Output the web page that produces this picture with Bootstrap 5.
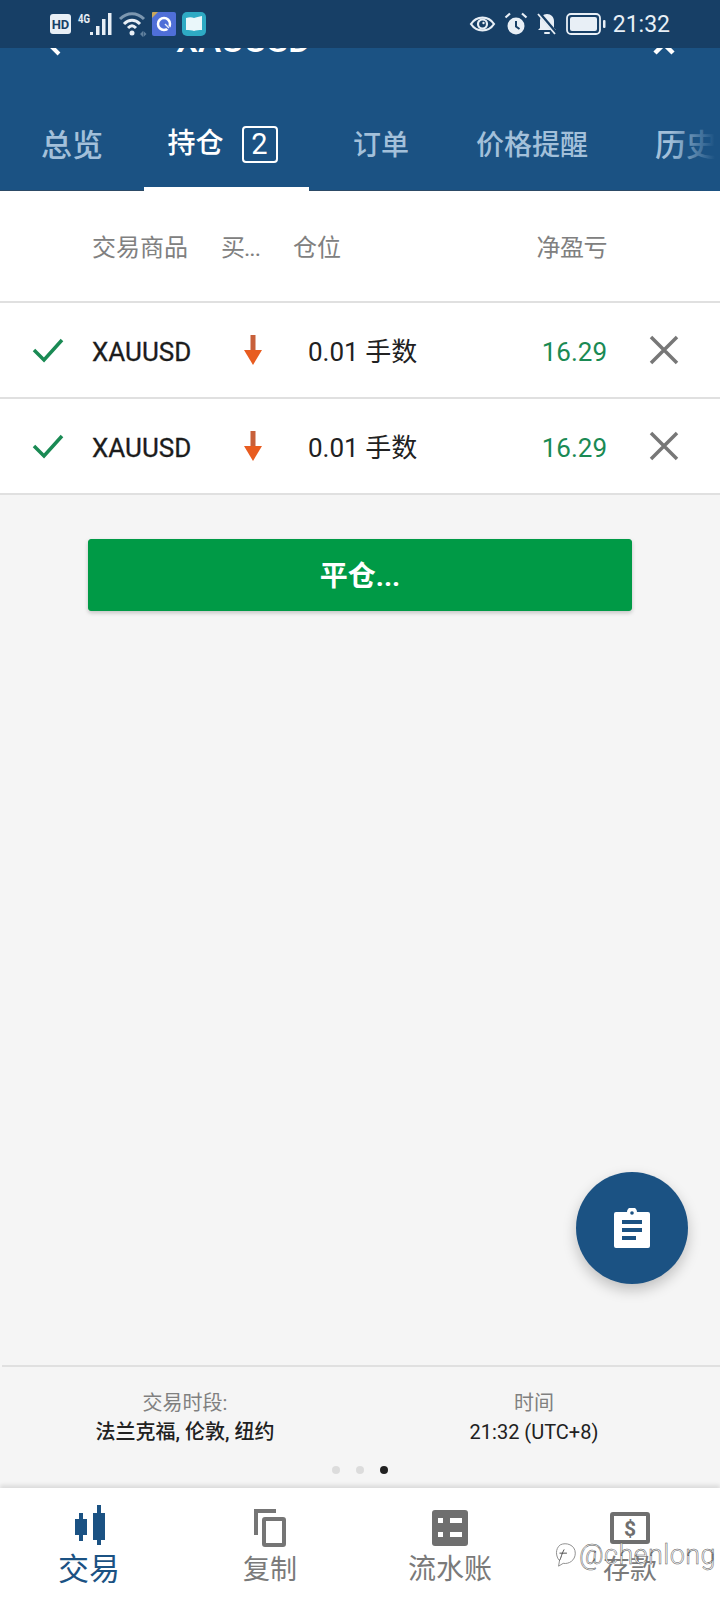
<!DOCTYPE html>
<html lang="zh-CN">
  <head>
    <meta charset="UTF-8" />
    <meta name="viewport" content="width=device-width, initial-scale=1.0" />
    <title>持仓</title>
    <link href="https://cdn.jsdelivr.net/npm/bootstrap@5.3.0/dist/css/bootstrap.min.css" rel="stylesheet" />
    <style>
      html, body { margin: 0; background: #f5f5f5; }
      .phone {
        width: 720px; height: 1600px; overflow: hidden;
        font-family: Roboto, "Noto Sans CJK SC", sans-serif;
        background: #f5f5f5; color: #212121;
      }
      /* status bar */
      .status-bar { height: 48px; background: #173f66; z-index: 2; padding: 0 50px 0 50px; color: #e8eff6; flex-shrink: 0; }
      .status-time { font-size: 23px; line-height: 1; margin-left: 7px; }
      .app-gap { margin-left: 6px; }
      /* header */
      .app-head { height: 143px; background: #1b5283; flex-shrink: 0; box-shadow: inset 0 -1px 0 #2c4a66; }
      .title-row { height: 34px; margin-top: -24px; padding-left: 176px; color: #fff; font-size: 35px; line-height: 34px; font-weight: 500; }
      .title-row svg { position: absolute; top: 10px; }
      .tab-row { height: 94px; margin-top: 39px; }
      .tab-item { height: 94px; min-width: 144px; padding-top: 4px; color: #a3c0da; font-size: 28px; font-weight: 500; white-space: nowrap; flex-shrink: 0; }
      .tab-big { font-size: 31px; }
      .tab-on { width: 165px; color: #fff; border-bottom: 4px solid #fff; padding-top: 4px; padding-right: 8px; }
      .tab-wide { padding-left: 23px; padding-right: 27px; }
      .tab-last { padding-left: 40px; }
      .tab-count { width: 36px; height: 37px; margin-left: 18px; border: 2px solid #fff; border-radius: 4px; font-size: 29px; font-weight: 400; line-height: 33px; text-align: center; }
      .tab-fade { position: absolute; right: 0; top: 0; width: 50px; height: 94px; background: linear-gradient(to right, rgba(27,82,131,0), #1b5283 90%); }
      /* positions */
      .pos-head { height: 112px; padding-top: 3px; background: #fff; border-bottom: 2px solid #e0e0e0; color: #808080; font-size: 24px; }
      .pos-row { height: 96px; background: #fff; border-bottom: 2px solid #e0e0e0; font-size: 26px; }
      .col-check { width: 92px; padding-left: 32px; }
      .col-symbol { width: 129px; }
      .col-side { width: 72px; }
      .head-side { letter-spacing: -1px; }
      .col-size { width: 244px; }
      .col-side-val { padding-left: 22px; }
      .col-size-val { padding-left: 15px; padding-top: 4px; }
      .col-net { width: 73px; margin-left: -3px; text-align: right; }
      .head-net { letter-spacing: -.5px; }
      .row-net { padding-top: 4px; }
      .col-close { padding-left: 42px; }
      .sym-text { padding-top: 4px; color: #1c1c1c; -webkit-text-stroke: .3px #1c1c1c; }
      .net-val { color: #1a8a54; }
      .close-btn-wide { width: 544px; height: 72px; margin: 44px 0 0 88px; padding-top: 10px; border-radius: 3px; background: #009a46; border-color: #009a46; color: #fff; font-size: 28px; font-weight: 700; box-shadow: 0 2px 4px rgba(0,0,0,.2); }
      .fab-btn { position: absolute; right: 32px; bottom: 316px; width: 112px; height: 112px; border-radius: 50%; background: #1b5283; box-shadow: 0 6px 14px rgba(0,0,0,.22); }
      /* session info */
      .info-box { height: 123px; border-top: 2px solid #e0e0e0; margin-left: 2px; flex-shrink: 0; padding-top: 22px; font-size: 20px; line-height: 29px; }
      .info-label { color: #808080; }
      .info-main { font-weight: 500; }
      .info-left { width: 366px; }
      .info-right { width: 332px; }
      .dot-row { gap: 16px; margin-top: 19px; height: 8px; padding-right: 2px; }
      .pg-dot { width: 8px; height: 8px; border-radius: 50%; background: #dcdcdc; }
      .pg-on { background: #212121; }
      /* bottom nav */
      .bottom-nav { height: 112px; background: #fff; flex-shrink: 0; box-shadow: 0 -3px 4px rgba(0,0,0,.1); }
      .nav-icon { height: 44px; margin-top: 18px; }
      .nav-icon-on { margin-top: 15px; }
      .nav-label { color: #7a7a7a; font-size: 27px; line-height: 34px; margin-top: 3px; }
      .nav-wide { font-size: 28px; }
      .nav-on { color: #1b5283; font-size: 31px; margin-top: 6px; margin-left: -2px; }
      .mark-over { position: absolute; left: 553px; top: 1537px; height: 36px; color: #fff; font-size: 27px; line-height: 36px; font-weight: 300; -webkit-text-stroke: .5px #555; letter-spacing: .4px; }
    </style>
  </head>
  <body>
    <div class="phone d-flex flex-column position-relative">
      <div class="status-bar d-flex align-items-center position-relative">
        <svg width="22" height="22" viewBox="0 0 22 22"><rect x="0" y="1" width="21" height="20" rx="3" fill="#e8eff6"/><text x="10.500" y="16" text-anchor="middle" font-family="Roboto" font-weight="700" font-size="13" fill="#173f66">HD</text></svg>
        <svg class="ms-1" width="38" height="26" viewBox="0 0 38 26"><text x="2" y="12" font-family="Roboto" font-weight="700" font-size="12" textLength="12" lengthAdjust="spacingAndGlyphs" fill="#e8eff6">4G</text><g fill="#e8eff6"><rect x="14" y="21" width="3" height="3"/><rect x="20" y="15" width="3.500" height="9"/><rect x="26" y="8" width="3.500" height="16"/><rect x="32" y="2" width="3.500" height="22"/></g></svg>
        <svg class="ms-1" width="30" height="26" viewBox="0 0 30 26" fill="none"><path d="M2 8C9 1 19 1 26 8" stroke="#7c97b0" stroke-width="3"/><path d="M6 13C11 8 17 8 22 13" stroke="#e8eff6" stroke-width="3"/><path d="M10 17C13 14 15 14 18 17" stroke="#e8eff6" stroke-width="3"/><circle cx="14" cy="22" r="2.500" fill="#e8eff6"/><path d="M22 23l3-3v6zM25.500 20l3 3-3 3z" fill="#5f7f9c"/></svg>
        <svg class="ms-1" width="24" height="24" viewBox="0 0 24 24"><rect width="24" height="24" rx="2" fill="#4f6fd8"/><path d="M0 6L6 0H1a1 1 0 0 0-1 1z" fill="#c9a75a"/><circle cx="12" cy="12" r="6" fill="none" stroke="#fff" stroke-width="2.500"/><path d="M12 12l7 6" stroke="#4f6fd8" stroke-width="3"/><path d="M13 12l4 4" stroke="#e8eff6" stroke-width="1.500"/></svg>
        <svg class="app-gap" width="24" height="24" viewBox="0 0 24 24"><rect width="24" height="24" rx="5" fill="#2eaac4"/><path d="M4 6c3-1 6-1 8 0 2-1 5-1 8-2v14c-3 0-6 0-8 1-2-1-5-1-8-1z" fill="#eaf7fa"/></svg>
        <div class="ms-auto d-flex align-items-center">
          <svg width="27" height="20" viewBox="0 0 26 20" fill="none"><path d="M1.500 10C7 1.500 19 1.500 24.500 10 19 18.500 7 18.500 1.500 10z" stroke="#e8eff6" stroke-width="2.200"/><circle cx="13" cy="10" r="4.500" stroke="#e8eff6" stroke-width="2.200"/><circle cx="14" cy="9" r="1.200" fill="#e8eff6"/></svg>
          <svg class="ms-2" width="24" height="24" viewBox="0 0 24 24" fill="none"><circle cx="12" cy="14" r="8.500" fill="#e8eff6"/><path d="M12 9v5.500l3.500 2.500" stroke="#173f66" stroke-width="2"/><path d="M1.500 5.500L6 1.500M22.500 5.500L18 1.500" stroke="#e8eff6" stroke-width="2.200"/></svg>
          <svg class="ms-2" width="22" height="24" viewBox="0 0 22 24"><path d="M11 2c4 0 7 3 7 7v7l2 2H2l2-2V9c0-4 3-7 7-7z" fill="#e8eff6"/><rect x="8" y="20" width="6" height="2" rx="1" fill="#e8eff6"/><path d="M3 1l17 20" stroke="#173f66" stroke-width="3.500"/><path d="M2 2l17 20" stroke="#e8eff6" stroke-width="1.800"/></svg>
          <svg class="ms-2" width="40" height="22" viewBox="0 0 40 22"><rect x="1" y="1" width="33" height="20" rx="4" fill="none" stroke="#e8eff6" stroke-width="1.800"/><rect x="4" y="4" width="27" height="14" rx="2" fill="#e8eff6"/><rect x="37" y="7" width="2.500" height="8" rx="1" fill="#e8eff6"/></svg>
          <span class="status-time">21:32</span>
        </div>
      </div>

      <div class="app-head">
        <div class="title-row position-relative">
          <svg style="left:44px" width="22" height="22" viewBox="0 0 22 22" fill="none"><path d="M17 2L8 11l9 9" stroke="#fff" stroke-width="4" transform="translate(-2 0)"/></svg>
          XAUUSD
          <svg style="left:652px" width="24" height="24" viewBox="0 0 24 24" fill="none"><path d="M3 1l18 18M21 1L3 19" stroke="#fff" stroke-width="4.500"/></svg>
        </div>
        <div class="tab-row d-flex position-relative overflow-hidden">
          <div class="tab-item tab-big d-flex align-items-center justify-content-center">总览</div>
          <div class="tab-item tab-on d-flex align-items-center justify-content-center">持仓<span class="tab-count">2</span></div>
          <div class="tab-item d-flex align-items-center justify-content-center">订单</div>
          <div class="tab-item tab-wide d-flex align-items-center">价格提醒</div>
          <div class="tab-item tab-big tab-last d-flex align-items-center">历史</div>
          <div class="tab-fade"></div>
        </div>
      </div>

      <div class="pos-head d-flex align-items-center">
        <div class="col-check"></div>
        <div class="col-symbol">交易商品</div>
        <div class="col-side head-side">买...</div>
        <div class="col-size">仓位</div>
        <div class="col-net head-net">净盈亏</div>
      </div>
      <div class="pos-row d-flex align-items-center">
        <div class="col-check d-flex"><svg width="32" height="26" viewBox="0 0 32 26" fill="none"><path d="M2 13l10 10L30 3" stroke="#1a8a54" stroke-width="3.500"/></svg></div>
        <div class="col-symbol sym-text">XAUUSD</div>
        <div class="col-side col-side-val d-flex"><svg width="20" height="30" viewBox="0 0 20 30"><rect x="7.500" y="0" width="5" height="16" fill="#c8603a"/><path d="M1 15h18l-9 15z" fill="#e85c20"/></svg></div>
        <div class="col-size col-size-val">0.01 手数</div>
        <div class="col-net row-net net-val">16.29</div>
        <div class="col-close d-flex"><svg width="30" height="30" viewBox="0 0 30 30" fill="none"><path d="M2 2l26 26M28 2L2 28" stroke="#777" stroke-width="3.500"/></svg></div>
      </div>
      <div class="pos-row d-flex align-items-center">
        <div class="col-check d-flex"><svg width="32" height="26" viewBox="0 0 32 26" fill="none"><path d="M2 13l10 10L30 3" stroke="#1a8a54" stroke-width="3.500"/></svg></div>
        <div class="col-symbol sym-text">XAUUSD</div>
        <div class="col-side col-side-val d-flex"><svg width="20" height="30" viewBox="0 0 20 30"><rect x="7.500" y="0" width="5" height="16" fill="#c8603a"/><path d="M1 15h18l-9 15z" fill="#e85c20"/></svg></div>
        <div class="col-size col-size-val">0.01 手数</div>
        <div class="col-net row-net net-val">16.29</div>
        <div class="col-close d-flex"><svg width="30" height="30" viewBox="0 0 30 30" fill="none"><path d="M2 2l26 26M28 2L2 28" stroke="#777" stroke-width="3.500"/></svg></div>
      </div>

      <button type="button" class="btn close-btn-wide">平仓...</button>

      <div class="flex-grow-1"></div>

      <div class="fab-btn d-flex align-items-center justify-content-center">
        <svg width="36" height="40" viewBox="0 0 36 40"><path d="M2 4h11a5 5 0 0 1 10 0h11a2 2 0 0 1 2 2v32a2 2 0 0 1-2 2H2a2 2 0 0 1-2-2V6a2 2 0 0 1 2-2z" fill="#fff"/><circle cx="18" cy="5" r="1.800" fill="#1b5283"/><g fill="#1b5283"><rect x="8" y="12" width="20" height="4"/><rect x="8" y="20" width="20" height="4"/><rect x="8" y="28" width="14" height="4"/></g></svg>
      </div>

      <div class="info-box">
        <div class="d-flex text-center">
          <div class="info-left"><div class="info-label">交易时段:</div><div class="info-main">法兰克福, 伦敦, 纽约</div></div>
          <div class="info-right"><div class="info-label">时间</div><div>21:32 (UTC+8)</div></div>
        </div>
        <div class="dot-row d-flex justify-content-center">
          <span class="pg-dot"></span><span class="pg-dot"></span><span class="pg-dot pg-on"></span>
        </div>
      </div>

      <div class="bottom-nav row g-0 position-relative">
        <div class="col-3 d-flex flex-column align-items-center">
          <div class="nav-icon nav-icon-on d-flex align-items-center"><svg width="32" height="40" viewBox="0 0 32 40" fill="#1b5283"><rect x="5" y="8" width="4" height="28"/><rect x="1" y="14" width="12" height="16"/><rect x="23" y="0" width="4" height="40"/><rect x="19" y="8" width="12" height="27"/></svg></div>
          <div class="nav-label nav-on">交易</div>
        </div>
        <div class="col-3 d-flex flex-column align-items-center">
          <div class="nav-icon d-flex align-items-center"><svg width="32" height="38" viewBox="0 0 32 38" fill="none" stroke="#757575" stroke-width="4"><path d="M2 26V2h20"/><rect x="10" y="10" width="20" height="26" rx="1"/></svg></div>
          <div class="nav-label">复制</div>
        </div>
        <div class="col-3 d-flex flex-column align-items-center">
          <div class="nav-icon d-flex align-items-center"><svg width="36" height="36" viewBox="0 0 36 36"><rect width="36" height="36" rx="3" fill="#6f6f6f"/><g fill="#fff"><rect x="6" y="8" width="5" height="5"/><rect x="6" y="22" width="5" height="5"/><rect x="18" y="8" width="12" height="5"/><rect x="18" y="22" width="12" height="5"/></g></svg></div>
          <div class="nav-label nav-wide">流水账</div>
        </div>
        <div class="col-3 d-flex flex-column align-items-center">
          <div class="nav-icon d-flex align-items-center"><svg width="40" height="32" viewBox="0 0 40 32"><rect x="2" y="2" width="36" height="28" rx="1" fill="none" stroke="#6f6f6f" stroke-width="4"/><text x="20" y="24" text-anchor="middle" font-family="Roboto" font-weight="700" font-size="21" fill="#6f6f6f">$</text></svg></div>
          <div class="nav-label">存款</div>
        </div>
      </div>

      <div class="mark-over d-flex align-items-center">
        <svg width="26" height="28" viewBox="0 0 28 28" fill="none" stroke="#555" stroke-width="1"><path d="M8 3C14 0 24 3 24 12c0 8-7 12-13 11l-5 3 1-6C3 16 2 7 8 3z" stroke="#888"/><path d="M12 8c-3 5-3 9-5 12M7 12h8" stroke="#444"/></svg>
        <span>@chenlong</span>
      </div>
    </div>
    <script src="https://cdn.jsdelivr.net/npm/bootstrap@5.3.0/dist/js/bootstrap.bundle.min.js"></script>
  </body>
</html>
